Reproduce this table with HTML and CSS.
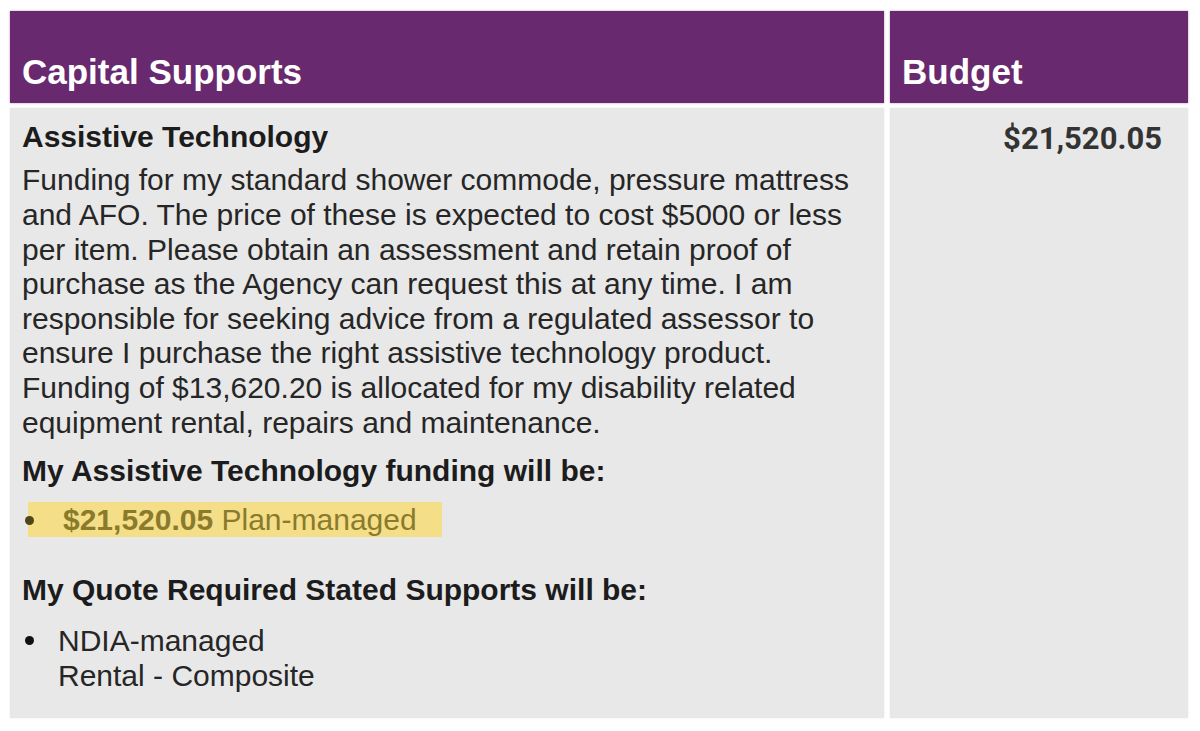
FILE: index.html
```html
<!DOCTYPE html>
<html lang="en">
<head>
<meta charset="utf-8">
<title>Capital Supports</title>
<link rel="stylesheet" href="styles.css">
</head>
<body>
<div class="table">
  <div class="head head-main">Capital Supports</div>
  <div class="head head-budget">Budget</div>
  <div class="cell cell-main">
    <h2 class="title">Assistive Technology</h2>
    <p class="para">Funding for my standard shower commode, pressure mattress and AFO. The price of these is expected to cost $5000 or less per item. Please obtain an assessment and retain proof of purchase as the Agency can request this at any time. I am responsible for seeking advice from a regulated assessor to ensure I purchase the right assistive technology product. Funding of $13,620.20 is allocated for my disability related equipment rental, repairs and maintenance.</p>
    <h3 class="sub">My Assistive Technology funding will be:</h3>
    <ul class="list list-hl">
      <li class="item hl"><span class="dot"></span><span class="item-text"><b class="amt">$21,520.05</b> Plan-managed</span></li>
    </ul>
    <h3 class="sub sub-2">My Quote Required Stated Supports will be:</h3>
    <ul class="list list-2">
      <li class="item"><span class="dot"></span><span class="item-text">NDIA-managed<br>Rental - Composite</span></li>
    </ul>
  </div>
  <div class="cell cell-budget">
    <div class="budget-amt">$21,520.05</div>
  </div>
</div>
</body>
</html>
```
FILE: styles.css
```css
* { box-sizing: border-box; }
html, body { margin: 0; padding: 0; background: #fff; }
body {
  width: 1200px;
  height: 731px;
  overflow: hidden;
  font-family: "Liberation Sans", Arial, sans-serif;
  color: #222;
}
.table {
  display: grid;
  grid-template-columns: 874px 298px;
  grid-template-rows: 92px 610px;
  column-gap: 6px;
  row-gap: 5px;
  padding: 11px 0 0 10px;
}
.head {
  background: #69296f;
  color: #fff;
  font-weight: 700;
  font-size: 35px;
  line-height: 40px;
  display: flex;
  align-items: flex-end;
  padding: 0 0 11px 12px;
  box-shadow: 0 0 2px rgba(105,41,111,0.5);
}
.cell {
  background: #e8e8e8;
  box-shadow: 0 0 2px rgba(0,0,0,0.08);
}
.cell-main {
  padding: 12px 12px 0 12px;
}
.title {
  margin: 0;
  font-size: 30px;
  line-height: 34.4px;
  font-weight: 700;
  color: #1c1c1c;
}
.para {
  margin: 9px 0 0 0;
  font-size: 30px;
  line-height: 34.6px;
  color: #262626;
}
.sub {
  margin: 14px 0 0 0;
  font-size: 30px;
  line-height: 34.4px;
  font-weight: 700;
  color: #1c1c1c;
}
.sub-2 { margin-top: 36px; }
.list {
  list-style: none;
  margin: 14px 0 0 0;
  padding: 0;
}
.list-2 { margin-top: 16px; }
.item {
  display: flex;
  align-items: flex-start;
  font-size: 30px;
  line-height: 35px;
  color: #262626;
}
.dot {
  width: 9px;
  height: 9px;
  border-radius: 50%;
  background: #111;
  margin: 13px 0 0 3px;
  flex: none;
}
.item-text { margin-left: 24px; }
.list-hl { margin-top: 13px; }
.hl {
  background: #f4de88;
  width: 414px;
  margin-left: 6px;
  color: #8a7a2c;
}
.hl .dot { background: #4e4519; margin-left: -3px; margin-top: 14px; }
.hl .item-text { margin-left: 29px; }
.amt { font-weight: 700; }
.cell-budget {
  display: flex;
  justify-content: flex-end;
  align-items: flex-start;
  padding: 14px 26px 0 0;
}
.budget-amt {
  font-family: Roboto, "Liberation Sans", sans-serif;
  font-weight: 700;
  font-size: 31px;
  line-height: 34px;
  color: #333;
}
```
